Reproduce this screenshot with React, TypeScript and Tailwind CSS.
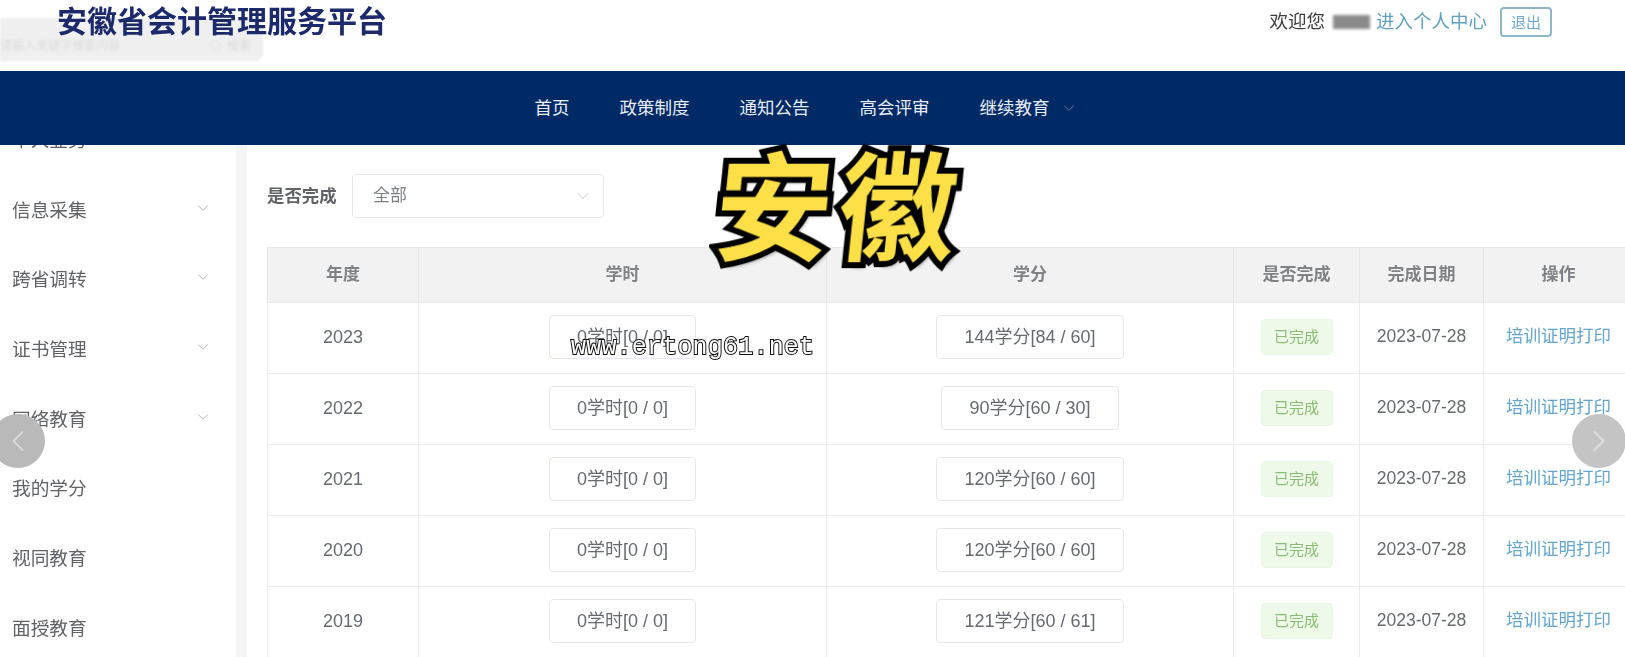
import { ChevronDown, ChevronLeft, ChevronRight, Search } from "lucide-react"

const cjk = "font-['Liberation_Sans','Noto_Sans_CJK_SC',sans-serif]"

const menu = [
  { label: "个人业务" },
  { label: "信息采集", more: true },
  { label: "跨省调转", more: true },
  { label: "证书管理", more: true },
  { label: "网络教育", more: true },
  { label: "我的学分" },
  { label: "视同教育" },
  { label: "面授教育" },
]

const rows = [
  { year: "2023", hours: "0学时[0 / 0]", credits: "144学分[84 / 60]" },
  { year: "2022", hours: "0学时[0 / 0]", credits: "90学分[60 / 30]" },
  { year: "2021", hours: "0学时[0 / 0]", credits: "120学分[60 / 60]" },
  { year: "2020", hours: "0学时[0 / 0]", credits: "120学分[60 / 60]" },
  { year: "2019", hours: "0学时[0 / 0]", credits: "121学分[60 / 61]" },
]

const columns = ["年度", "学时", "学分", "是否完成", "完成日期", "操作"]

function Header() {
  return (
    <header className="relative flex h-[71px] items-start justify-between bg-white pr-[73px]">
      {/* search box sitting behind the title */}
      <div className="absolute left-0 top-[18px] flex h-[43px] w-[263px] items-end justify-between rounded-br-lg bg-[#efefef] pb-[7px] pr-3 text-xs text-[#dcdcdc] blur-[1px]">
        <span>请输入关键字搜索内容</span>
        <span className="flex items-center gap-1">
          <Search className="size-[14px]" strokeWidth={1.5} />
          搜索
        </span>
      </div>
      <h1 className="relative pl-[57px] pt-[2px] text-[30px] font-bold leading-10 text-[#1c2a6b]">安徽省会计管理服务平台</h1>
      <div className="relative flex items-center pt-[7px] text-[18.5px] leading-7">
        <span className="text-[#3d3d3d]">欢迎您</span>
        <span className="ml-2 mr-[6px] h-[14px] w-[37px] bg-[#8a8a8a] blur-[1.5px]" />
        <a className="text-[#5f9fc0]">进入个人中心</a>
        <button className="ml-[13px] h-[30px] w-[52px] rounded-sm border-2 border-[#8db6c6] text-[15px] leading-none text-[#6ea7d2]">退出</button>
      </div>
    </header>
  )
}

function Nav() {
  return (
    <nav className="relative z-10 flex h-[74px] items-center justify-center gap-[50px] bg-[#002a66] pr-[41px] text-[17.5px] text-[#e8edf4]">
      <a>首页</a>
      <a>政策制度</a>
      <a>通知公告</a>
      <a>高会评审</a>
      <a className="relative">
        继续教育
        <ChevronDown className="absolute -right-7 top-[4px] size-[18px] text-[#6f88ab]" strokeWidth={1.2} />
      </a>
    </nav>
  )
}

function Sidebar() {
  return (
    <aside className="-mt-[39px] w-[236px] shrink-0">
      {menu.map((item) => (
        <div key={item.label} className="flex h-[69.7px] items-center justify-between pl-3 pr-6 text-[18.7px] text-[#606266]">
          <span>{item.label}</span>
          {item.more && <ChevronDown className="-mt-[6px] size-[18px] text-[#a8abb2]" strokeWidth={1.2} />}
        </div>
      ))}
    </aside>
  )
}

function RecordTable() {
  return (
    <table className="w-[1366px] table-fixed border-collapse text-center text-lg text-[#666a6e]">
      <colgroup>
        <col className="w-[151px]" />
        <col className="w-[408px]" />
        <col className="w-[407px]" />
        <col className="w-[126px]" />
        <col className="w-[124px]" />
        <col className="w-[150px]" />
      </colgroup>
      <thead>
        <tr className="h-[55px] bg-[#f2f2f2]">
          {columns.map((name) => (
            <th key={name} className="border border-[#e6e7e9] text-[17px] font-bold text-[#808285]">
              {name}
            </th>
          ))}
        </tr>
      </thead>
      <tbody>
        {rows.map((row) => (
          <tr key={row.year} className="h-[71px]">
            <td className="border border-[#e9ebef] pb-[2px]">{row.year}</td>
            <td className="border border-[#e9ebef] pb-[2px]">
              <span className="inline-block rounded border border-[#e4e7ed] px-[27px] py-[9px] leading-6">{row.hours}</span>
            </td>
            <td className="border border-[#e9ebef] pb-[2px]">
              <span className="inline-block rounded border border-[#e4e7ed] px-[27px] py-[9px] leading-6">{row.credits}</span>
            </td>
            <td className="border border-[#e9ebef] pb-[2px]">
              <span className="inline-block h-9 w-[72px] rounded border border-[#e9f6e1] bg-[#eff9e9] text-[15px] leading-[34px] text-[#87bd71]">已完成</span>
            </td>
            <td className="border border-[#e9ebef] pb-[2px] text-[17.5px]">2023-07-28</td>
            <td className="border border-[#e9ebef] pb-[2px] text-[17.5px] text-[#63a5cc]">培训证明打印</td>
          </tr>
        ))}
      </tbody>
    </table>
  )
}

export default function App() {
  return (
    <div className={`relative h-[657px] w-[1625px] overflow-hidden bg-white ${cjk}`}>
      {/* the reference is a soft video frame */}
      <div className="blur-[0.5px]">
        <Header />
        <Nav />
        <div className="flex">
          <Sidebar />
          <div className="h-[512px] w-[11px] shrink-0 bg-[#f5f5f5]" />
          <main className="min-w-0 flex-1 pl-5 pt-[29px]">
            <div className="flex items-center text-[17.4px] text-[#606266]">
              <span className="w-[85px] font-bold">是否完成</span>
              <div className="flex h-11 w-[252px] items-center justify-between rounded border border-[#e4e7ed] pl-5 pr-[10px]">
                <span className="text-[17px] text-[#7b7e83]">全部</span>
                <ChevronDown className="size-5 text-[#c0c4cc]" strokeWidth={1.2} />
              </div>
            </div>
            <div className="mt-[29px]">
              <RecordTable />
            </div>
          </main>
        </div>
      </div>

      {/* video overlays */}
      <div className="absolute left-[716px] top-[120px] z-20 -skew-x-6 font-['Noto_Sans_CJK_SC',sans-serif] text-[118px] font-bold leading-[160px] tracking-[6px] text-[#fde047] [-webkit-text-stroke:12px_#000] [paint-order:stroke_fill] [text-shadow:4px_5px_4px_rgba(0,0,0,0.45)]">
        安徽
      </div>
      <div className="absolute left-[571px] top-[332px] z-20 font-['Liberation_Mono',monospace] text-[25px] leading-8 tracking-[0.2px] text-white [-webkit-text-stroke:2px_#111] [paint-order:stroke_fill]">
        www.ertong61.net
      </div>
      <button className="absolute -left-[9px] top-[414px] z-20 flex size-[54px] items-center justify-center rounded-full bg-[#b9b9b9] text-[#d9d9d9]">
        <ChevronLeft className="size-9" strokeWidth={1.2} />
      </button>
      <button className="absolute left-[1572px] top-[414px] z-20 flex size-[54px] items-center justify-center rounded-full bg-[#c4c4c4] text-[#dedede]">
        <ChevronRight className="size-9" strokeWidth={1.2} />
      </button>
    </div>
  )
}
